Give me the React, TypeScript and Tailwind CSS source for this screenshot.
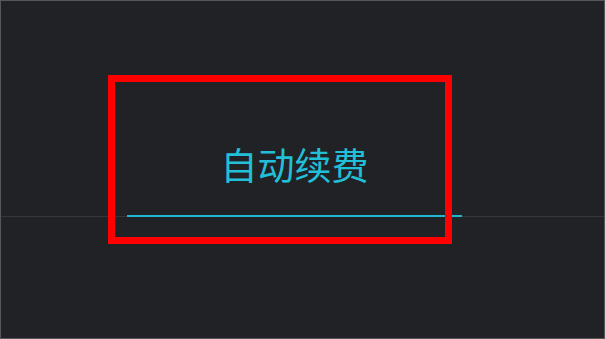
import React from "react";

export default function App() {
  return (
    <div className="relative w-[605px] h-[339px] border border-[#55575b] bg-[#212226] overflow-hidden">
      <div className="mt-[111px] flex border-b border-[#35373b]">
        <div className="ml-[126px] -mb-px w-[335px] h-[105px] flex items-center justify-center border-b-2 border-[#1db8cf]">
          <span
            className="text-[37px] leading-none text-[#22c0d8] pt-[1px]"
            style={{ fontFamily: '"Microsoft YaHei", "Noto Sans CJK SC", sans-serif' }}
          >
            自动续费
          </span>
        </div>
      </div>
      <div className="absolute left-[107px] top-[74px] w-[344px] h-[169px] border-[7px] border-[#ff0000]" />
    </div>
  );
}
